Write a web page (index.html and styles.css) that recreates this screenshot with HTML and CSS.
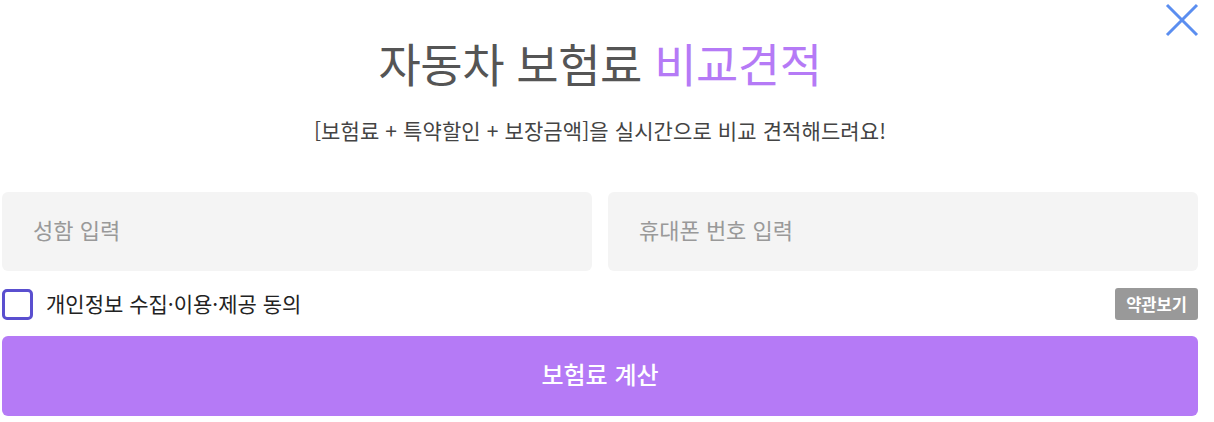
FILE: index.html
```html
<!DOCTYPE html>
<html lang="ko">
<head>
<meta charset="utf-8">
<link rel="stylesheet" href="styles.css">
</head>
<body>
<div class="modal">
  <button class="close" aria-label="닫기">
    <svg width="34" height="34" viewBox="0 0 34 34"><path d="M2 2 L32 32 M32 2 L2 32" stroke="#5b8ef0" stroke-width="3" fill="none"/></svg>
  </button>
  <h1 class="title">자동차 보험료 <span class="accent">비교견적</span></h1>
  <p class="subtitle">[보험료 + 특약할인 + 보장금액]을 실시간으로 비교 견적해드려요!</p>
  <div class="fields">
    <input class="field" type="text" placeholder="성함 입력">
    <input class="field" type="text" placeholder="휴대폰 번호 입력">
  </div>
  <div class="agree">
    <label class="check"><span class="box"></span><span class="label">개인정보 수집·이용·제공 동의</span></label>
    <button class="terms">약관보기</button>
  </div>
  <button class="submit">보험료 계산</button>
</div>
</body>
</html>
```
FILE: styles.css
```css
html, body { margin: 0; padding: 0; background: #fff; }
body { font-family: "Noto Sans CJK KR", "Noto Sans", sans-serif; }
.modal {
  position: relative;
  width: 1196px;
  padding: 0 0 0 2px;
  display: flex;
  flex-direction: column;
}
.close {
  position: absolute;
  top: 3px;
  right: -1px;
  border: 0;
  background: none;
  padding: 0;
  cursor: pointer;
}
.close svg { display: block; }
.title {
  margin: 29px 0 0;
  text-align: center;
  font-size: 46px;
  font-weight: 400;
  color: #555;
  line-height: 66px;
  letter-spacing: -0.5px;
}
.accent { color: #b57af6; }
.subtitle {
  margin: 20px 0 0;
  text-align: center;
  font-size: 21px;
  color: #444;
  line-height: 30px;
  letter-spacing: 0.1px;
}
.fields {
  margin-top: 47px;
  display: grid;
  grid-template-columns: 1fr 1fr;
  gap: 16px;
}
.field {
  height: 79px;
  box-sizing: border-box;
  border: 0;
  border-radius: 6px;
  background: #f4f4f4;
  padding: 0 31px 5px;
  font-family: inherit;
  font-size: 22px;
  color: #333;
  outline: none;
}
.field::placeholder { color: #999; }
.agree {
  margin-top: 17px;
  display: flex;
  align-items: center;
  justify-content: space-between;
  height: 32px;
}
.check { display: flex; align-items: center; gap: 13px; cursor: pointer; }
.box {
  width: 31px; height: 31px;
  box-sizing: border-box;
  border: 3px solid #5a4fcf;
  border-radius: 5px;
}
.label { font-size: 21px; color: #222; padding-bottom: 2px; }
.terms {
  height: 32px;
  width: 83px;
  border: 0;
  border-radius: 3px;
  background: #999;
  color: #fff;
  font-family: inherit;
  font-size: 16.5px;
  font-weight: 700;
  padding: 0;
}
.submit {
  margin-top: 16px;
  height: 80px;
  border: 0;
  border-radius: 6px;
  background: #b57af6;
  color: #fff;
  font-family: inherit;
  font-size: 24px;
  font-weight: 500;
  padding: 0 0 5px;
}
```
